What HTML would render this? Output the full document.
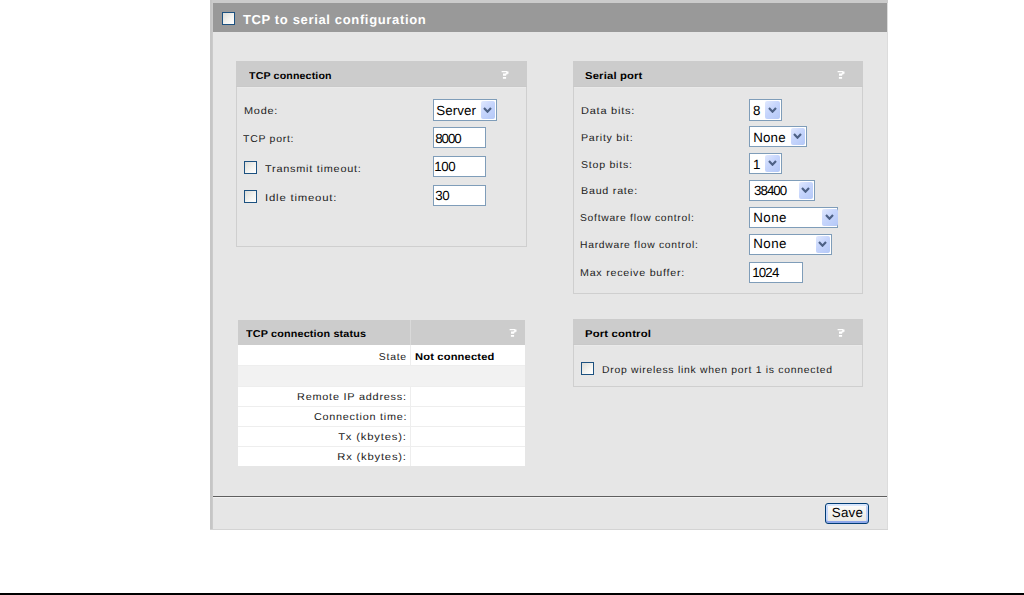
<!DOCTYPE html>
<html><head><meta charset="utf-8"><title>TCP to serial configuration</title>
<style>
html,body{margin:0;padding:0;}
body{width:1024px;height:595px;overflow:hidden;position:relative;background:#fff;font-family:"Liberation Sans", sans-serif;text-rendering:geometricPrecision;}
</style></head><body>
<div style="position:absolute;left:210px;top:0px;width:678px;height:530px;background:#cbcbcb;"></div><div style="position:absolute;left:210px;top:0px;width:2px;height:530px;background:#c6c6c6;"></div><div style="position:absolute;left:213px;top:3px;width:674px;height:526px;background:#e6e6e6;"></div><div style="position:absolute;left:887px;top:3px;width:1px;height:527px;background:#dcdcdc;"></div><div style="position:absolute;left:210px;top:529px;width:678px;height:1px;background:#d4d4d4;"></div><div style="position:absolute;left:213px;top:3px;width:674px;height:29px;background:#999999;"></div><div style="position:absolute;left:222px;top:12px;width:11px;height:11px;border:1px solid #1c5180;background:linear-gradient(135deg,#dcdcd7 0%,#f5f5f2 60%,#ffffff 100%);"></div><div style="position:absolute;left:236px;top:61px;width:289px;height:184px;border:1px solid #cfcfcf;background:#e6e6e6;"></div><div style="position:absolute;left:237px;top:87px;width:289px;height:1px;background:#eaeaea;"></div><div style="position:absolute;left:236px;top:61px;width:291px;height:26px;background:#cccccc;"></div><div style="position:absolute;left:236px;top:86px;width:291px;height:1px;background:#c9c9c9;"></div><svg width="8" height="8" style="position:absolute;left:501px;top:71px" viewBox="0 0 8 8"><path fill="#fff" d="M0.6 0.1h5.6v1.1h-5.6z M5.2 0.6h2.3v2.2h-2.3z M4.2 2.2h2.2v1.2h-2.2z M2 2.6h3.2v2.2h-3.2z M1.9 6h3.2v1.8h-3.2z"/></svg><div style="position:absolute;left:244px;top:161px;width:11px;height:11px;border:1px solid #1c5180;background:linear-gradient(135deg,#dcdcd7 0%,#f5f5f2 60%,#ffffff 100%);"></div><div style="position:absolute;left:244px;top:190px;width:11px;height:11px;border:1px solid #1c5180;background:linear-gradient(135deg,#dcdcd7 0%,#f5f5f2 60%,#ffffff 100%);"></div><div style="position:absolute;left:433px;top:99px;width:62px;height:20px;border:1px solid #7f9db9;background:#fff;"><div style="position:absolute;left:47px;top:1px;width:14px;height:18px;border-radius:2px;background:linear-gradient(135deg,#e1e9fe 0%,#c6d5fc 45%,#b4c8f7 100%);"><svg width="9" height="6" viewBox="0 0 9 6" style="position:absolute;left:2px;top:6px"><path d="M1 1.1 L4.5 4.7 L8 1.1" stroke="#4d6185" stroke-width="2.2" fill="none"/></svg></div></div><div style="position:absolute;left:433px;top:127px;width:51px;height:19px;border:1px solid #7f9db9;background:#fff;"></div><div style="position:absolute;left:433px;top:156px;width:51px;height:19px;border:1px solid #7f9db9;background:#fff;"></div><div style="position:absolute;left:433px;top:185px;width:51px;height:19px;border:1px solid #7f9db9;background:#fff;"></div><div style="position:absolute;left:573px;top:61px;width:288px;height:231px;border:1px solid #cfcfcf;background:#e6e6e6;"></div><div style="position:absolute;left:574px;top:87px;width:288px;height:1px;background:#eaeaea;"></div><div style="position:absolute;left:573px;top:61px;width:290px;height:26px;background:#cccccc;"></div><div style="position:absolute;left:573px;top:86px;width:290px;height:1px;background:#c9c9c9;"></div><svg width="8" height="8" style="position:absolute;left:837px;top:71px" viewBox="0 0 8 8"><path fill="#fff" d="M0.6 0.1h5.6v1.1h-5.6z M5.2 0.6h2.3v2.2h-2.3z M4.2 2.2h2.2v1.2h-2.2z M2 2.6h3.2v2.2h-3.2z M1.9 6h3.2v1.8h-3.2z"/></svg><div style="position:absolute;left:749px;top:99px;width:31px;height:20px;border:1px solid #7f9db9;background:#fff;"><div style="position:absolute;left:15px;top:1px;width:15px;height:18px;border-radius:2px;background:linear-gradient(135deg,#e1e9fe 0%,#c6d5fc 45%,#b4c8f7 100%);"><svg width="9" height="6" viewBox="0 0 9 6" style="position:absolute;left:3px;top:6px"><path d="M1 1.1 L4.5 4.7 L8 1.1" stroke="#4d6185" stroke-width="2.2" fill="none"/></svg></div></div><div style="position:absolute;left:749px;top:126px;width:56px;height:19px;border:1px solid #7f9db9;background:#fff;"><div style="position:absolute;left:41px;top:1px;width:14px;height:17px;border-radius:2px;background:linear-gradient(135deg,#e1e9fe 0%,#c6d5fc 45%,#b4c8f7 100%);"><svg width="9" height="6" viewBox="0 0 9 6" style="position:absolute;left:2px;top:5px"><path d="M1 1.1 L4.5 4.7 L8 1.1" stroke="#4d6185" stroke-width="2.2" fill="none"/></svg></div></div><div style="position:absolute;left:749px;top:153px;width:31px;height:19px;border:1px solid #7f9db9;background:#fff;"><div style="position:absolute;left:15px;top:1px;width:15px;height:17px;border-radius:2px;background:linear-gradient(135deg,#e1e9fe 0%,#c6d5fc 45%,#b4c8f7 100%);"><svg width="9" height="6" viewBox="0 0 9 6" style="position:absolute;left:3px;top:5px"><path d="M1 1.1 L4.5 4.7 L8 1.1" stroke="#4d6185" stroke-width="2.2" fill="none"/></svg></div></div><div style="position:absolute;left:749px;top:180px;width:64px;height:19px;border:1px solid #7f9db9;background:#fff;"><div style="position:absolute;left:49px;top:1px;width:14px;height:17px;border-radius:2px;background:linear-gradient(135deg,#e1e9fe 0%,#c6d5fc 45%,#b4c8f7 100%);"><svg width="9" height="6" viewBox="0 0 9 6" style="position:absolute;left:2px;top:5px"><path d="M1 1.1 L4.5 4.7 L8 1.1" stroke="#4d6185" stroke-width="2.2" fill="none"/></svg></div></div><div style="position:absolute;left:749px;top:207px;width:87px;height:19px;border:1px solid #7f9db9;background:#fff;"><div style="position:absolute;left:72px;top:1px;width:16px;height:17px;border-radius:2px;background:linear-gradient(135deg,#e1e9fe 0%,#c6d5fc 45%,#b4c8f7 100%);"><svg width="9" height="6" viewBox="0 0 9 6" style="position:absolute;left:3px;top:5px"><path d="M1 1.1 L4.5 4.7 L8 1.1" stroke="#4d6185" stroke-width="2.2" fill="none"/></svg></div></div><div style="position:absolute;left:749px;top:234px;width:81px;height:19px;border:1px solid #7f9db9;background:#fff;"><div style="position:absolute;left:66px;top:1px;width:14px;height:17px;border-radius:2px;background:linear-gradient(135deg,#e1e9fe 0%,#c6d5fc 45%,#b4c8f7 100%);"><svg width="9" height="6" viewBox="0 0 9 6" style="position:absolute;left:2px;top:5px"><path d="M1 1.1 L4.5 4.7 L8 1.1" stroke="#4d6185" stroke-width="2.2" fill="none"/></svg></div></div><div style="position:absolute;left:749px;top:262px;width:52px;height:19px;border:1px solid #7f9db9;background:#fff;"></div><div style="position:absolute;left:238px;top:320px;width:287px;height:146px;background:#eeeeee;"></div><div style="position:absolute;left:238px;top:320px;width:287px;height:25px;background:#cccccc;"></div><div style="position:absolute;left:410px;top:320px;width:1px;height:25px;background:#d9d9d9;"></div><svg width="8" height="8" style="position:absolute;left:509px;top:329px" viewBox="0 0 8 8"><path fill="#fff" d="M0.6 0.1h5.6v1.1h-5.6z M5.2 0.6h2.3v2.2h-2.3z M4.2 2.2h2.2v1.2h-2.2z M2 2.6h3.2v2.2h-3.2z M1.9 6h3.2v1.8h-3.2z"/></svg><div style="position:absolute;left:238px;top:345px;width:172px;height:20px;background:#fff;"></div><div style="position:absolute;left:411px;top:345px;width:114px;height:20px;background:#fff;"></div><div style="position:absolute;left:238px;top:366px;width:287px;height:20px;background:#f2f2f2;"></div><div style="position:absolute;left:238px;top:387px;width:172px;height:19px;background:#fff;"></div><div style="position:absolute;left:411px;top:387px;width:114px;height:19px;background:#fff;"></div><div style="position:absolute;left:238px;top:407px;width:172px;height:19px;background:#fff;"></div><div style="position:absolute;left:411px;top:407px;width:114px;height:19px;background:#fff;"></div><div style="position:absolute;left:238px;top:427px;width:172px;height:19px;background:#fff;"></div><div style="position:absolute;left:411px;top:427px;width:114px;height:19px;background:#fff;"></div><div style="position:absolute;left:238px;top:447px;width:172px;height:19px;background:#fff;"></div><div style="position:absolute;left:411px;top:447px;width:114px;height:19px;background:#fff;"></div><div style="position:absolute;left:573px;top:319px;width:288px;height:66px;border:1px solid #cfcfcf;background:#e6e6e6;"></div><div style="position:absolute;left:574px;top:345px;width:288px;height:1px;background:#eaeaea;"></div><div style="position:absolute;left:573px;top:319px;width:290px;height:26px;background:#cccccc;"></div><div style="position:absolute;left:573px;top:344px;width:290px;height:1px;background:#c9c9c9;"></div><svg width="8" height="8" style="position:absolute;left:837px;top:329px" viewBox="0 0 8 8"><path fill="#fff" d="M0.6 0.1h5.6v1.1h-5.6z M5.2 0.6h2.3v2.2h-2.3z M4.2 2.2h2.2v1.2h-2.2z M2 2.6h3.2v2.2h-3.2z M1.9 6h3.2v1.8h-3.2z"/></svg><div style="position:absolute;left:581px;top:362px;width:11px;height:11px;border:1px solid #1c5180;background:linear-gradient(135deg,#dcdcd7 0%,#f5f5f2 60%,#ffffff 100%);"></div><div style="position:absolute;left:213px;top:496px;width:674px;height:1px;background:#5f5f5f;"></div><div style="position:absolute;left:213px;top:497px;width:674px;height:1px;background:#f2f2f2;"></div><div style="position:absolute;left:825px;top:503px;width:42px;height:19px;border:1px solid #003c74;border-radius:3px;background:linear-gradient(180deg,#ffffff 0%,#f4f3ee 40%,#ecebe6 85%,#d6d0c5 100%);box-shadow:inset 0 -2px 0 #8fa8ea, inset 0 2px 0 #d8e6fc, inset 2px 0 0 #c6d8fa, inset -2px 0 0 #bdd0f8;"></div><div style="position:absolute;left:0px;top:593px;width:1024px;height:2px;background:#000;"></div>
<span id="hdr" style="position:absolute;top:11px;font-size:13px;line-height:17px;font-weight:700;color:#ffffff;letter-spacing:0.650px;white-space:pre;left:242.90px;transform-origin:0 0;">TCP to serial configuration<i style="display:inline-block;width:0;height:0;"></i></span><span id="t1" style="position:absolute;top:70px;font-size:10px;line-height:14px;font-weight:700;color:#000;letter-spacing:0.150px;white-space:pre;transform:scaleX(1.0601);left:249.00px;transform-origin:0 0;">TCP connection<i style="display:inline-block;width:0;height:0;"></i></span><span id="mode" style="position:absolute;top:105px;font-size:10px;line-height:14px;font-weight:400;color:#000;letter-spacing:0.700px;white-space:pre;transform:scaleX(1.0919);color:#222;left:244.09px;transform-origin:0 0;">Mode:<i style="display:inline-block;width:0;height:0;"></i></span><span id="tcpport" style="position:absolute;top:133px;font-size:10px;line-height:14px;font-weight:400;color:#000;letter-spacing:0.700px;white-space:pre;transform:scaleX(1.0467);color:#222;left:243.40px;transform-origin:0 0;">TCP port:<i style="display:inline-block;width:0;height:0;"></i></span><span id="txto" style="position:absolute;top:163px;font-size:10px;line-height:14px;font-weight:400;color:#000;letter-spacing:0.700px;white-space:pre;transform:scaleX(1.0884);color:#222;left:265.19px;transform-origin:0 0;">Transmit timeout:<i style="display:inline-block;width:0;height:0;"></i></span><span id="idle" style="position:absolute;top:192px;font-size:10px;line-height:14px;font-weight:400;color:#000;letter-spacing:0.700px;white-space:pre;transform:scaleX(1.1368);color:#222;left:265.00px;transform-origin:0 0;">Idle timeout:<i style="display:inline-block;width:0;height:0;"></i></span><span id="server" style="position:absolute;top:102px;font-size:13.33px;line-height:17px;font-weight:400;color:#000;letter-spacing:0.120px;white-space:pre;left:436.19px;transform-origin:0 0;">Server<i style="display:inline-block;width:0;height:0;"></i></span><span id="i8000" style="position:absolute;top:130px;font-size:13.33px;line-height:17px;font-weight:400;color:#000;letter-spacing:-1.062px;white-space:pre;left:435.19px;transform-origin:0 0;">8000<i style="display:inline-block;width:0;height:0;"></i></span><span id="i100" style="position:absolute;top:158px;font-size:13.33px;line-height:17px;font-weight:400;color:#000;letter-spacing:-0.400px;white-space:pre;left:434.19px;transform-origin:0 0;">100<i style="display:inline-block;width:0;height:0;"></i></span><span id="i30" style="position:absolute;top:187px;font-size:13.33px;line-height:17px;font-weight:400;color:#000;letter-spacing:-0.400px;white-space:pre;left:435.19px;transform-origin:0 0;">30<i style="display:inline-block;width:0;height:0;"></i></span><span id="t2" style="position:absolute;top:70px;font-size:10px;line-height:14px;font-weight:700;color:#000;letter-spacing:0.150px;white-space:pre;transform:scaleX(1.1259);left:584.69px;transform-origin:0 0;">Serial port<i style="display:inline-block;width:0;height:0;"></i></span><span id="sl0" style="position:absolute;top:105px;font-size:10px;line-height:14px;font-weight:400;color:#000;letter-spacing:0.700px;white-space:pre;transform:scaleX(1.0973);color:#222;left:580.69px;transform-origin:0 0;">Data bits:<i style="display:inline-block;width:0;height:0;"></i></span><span id="sl1" style="position:absolute;top:132px;font-size:10px;line-height:14px;font-weight:400;color:#000;letter-spacing:0.700px;white-space:pre;transform:scaleX(1.0630);color:#222;left:580.69px;transform-origin:0 0;">Parity bit:<i style="display:inline-block;width:0;height:0;"></i></span><span id="sl2" style="position:absolute;top:159px;font-size:10px;line-height:14px;font-weight:400;color:#000;letter-spacing:0.700px;white-space:pre;transform:scaleX(1.0606);color:#222;left:580.69px;transform-origin:0 0;">Stop bits:<i style="display:inline-block;width:0;height:0;"></i></span><span id="sl3" style="position:absolute;top:185px;font-size:10px;line-height:14px;font-weight:400;color:#000;letter-spacing:0.700px;white-space:pre;transform:scaleX(1.0737);color:#222;left:580.69px;transform-origin:0 0;">Baud rate:<i style="display:inline-block;width:0;height:0;"></i></span><span id="sl4" style="position:absolute;top:212px;font-size:10px;line-height:14px;font-weight:400;color:#000;letter-spacing:0.700px;white-space:pre;transform:scaleX(1.0316);color:#222;left:580.19px;transform-origin:0 0;">Software flow control:<i style="display:inline-block;width:0;height:0;"></i></span><span id="sl5" style="position:absolute;top:239px;font-size:10px;line-height:14px;font-weight:400;color:#000;letter-spacing:0.700px;white-space:pre;transform:scaleX(1.0320);color:#222;left:580.19px;transform-origin:0 0;">Hardware flow control:<i style="display:inline-block;width:0;height:0;"></i></span><span id="sl6" style="position:absolute;top:267px;font-size:10px;line-height:14px;font-weight:400;color:#000;letter-spacing:0.700px;white-space:pre;transform:scaleX(1.0698);color:#222;left:580.19px;transform-origin:0 0;">Max receive buffer:<i style="display:inline-block;width:0;height:0;"></i></span><span id="s8" style="position:absolute;top:102px;font-size:13.33px;line-height:17px;font-weight:400;color:#000;letter-spacing:0.000px;white-space:pre;left:753.00px;transform-origin:0 0;">8<i style="display:inline-block;width:0;height:0;"></i></span><span id="sn1" style="position:absolute;top:129px;font-size:13.33px;line-height:17px;font-weight:400;color:#000;letter-spacing:0.197px;white-space:pre;left:753.19px;transform-origin:0 0;">None<i style="display:inline-block;width:0;height:0;"></i></span><span id="s1" style="position:absolute;top:156px;font-size:13.33px;line-height:17px;font-weight:400;color:#000;letter-spacing:0.000px;white-space:pre;left:753.00px;transform-origin:0 0;">1<i style="display:inline-block;width:0;height:0;"></i></span><span id="s384" style="position:absolute;top:182px;font-size:13.33px;line-height:17px;font-weight:400;color:#000;letter-spacing:-1.000px;white-space:pre;left:754.09px;transform-origin:0 0;">38400<i style="display:inline-block;width:0;height:0;"></i></span><span id="sn2" style="position:absolute;top:209px;font-size:13.33px;line-height:17px;font-weight:400;color:#000;letter-spacing:0.464px;white-space:pre;left:753.19px;transform-origin:0 0;">None<i style="display:inline-block;width:0;height:0;"></i></span><span id="sn3" style="position:absolute;top:235px;font-size:13.33px;line-height:17px;font-weight:400;color:#000;letter-spacing:0.464px;white-space:pre;left:753.19px;transform-origin:0 0;">None<i style="display:inline-block;width:0;height:0;"></i></span><span id="i1024" style="position:absolute;top:264px;font-size:13.33px;line-height:17px;font-weight:400;color:#000;letter-spacing:-0.870px;white-space:pre;left:752.29px;transform-origin:0 0;">1024<i style="display:inline-block;width:0;height:0;"></i></span><span id="t3" style="position:absolute;top:328px;font-size:10px;line-height:14px;font-weight:700;color:#000;letter-spacing:0.150px;white-space:pre;transform:scaleX(1.0793);left:245.50px;transform-origin:0 0;">TCP connection status<i style="display:inline-block;width:0;height:0;"></i></span><span id="state" style="position:absolute;top:351px;font-size:10px;line-height:14px;font-weight:400;color:#000;letter-spacing:0.700px;white-space:pre;transform:scaleX(1.0428);color:#222;right:617.40px;transform-origin:100% 0;">State<i style="display:inline-block;width:0;height:0;"></i></span><span id="notc" style="position:absolute;top:351px;font-size:10px;line-height:14px;font-weight:700;color:#000;letter-spacing:0.150px;white-space:pre;transform:scaleX(1.1133);left:415.09px;transform-origin:0 0;">Not connected<i style="display:inline-block;width:0;height:0;"></i></span><span id="rip" style="position:absolute;top:391px;font-size:10px;line-height:14px;font-weight:400;color:#000;letter-spacing:0.700px;white-space:pre;transform:scaleX(1.0892);color:#222;right:616.90px;transform-origin:100% 0;">Remote IP address:<i style="display:inline-block;width:0;height:0;"></i></span><span id="ctime" style="position:absolute;top:411px;font-size:10px;line-height:14px;font-weight:400;color:#000;letter-spacing:0.700px;white-space:pre;transform:scaleX(1.0823);color:#222;right:616.90px;transform-origin:100% 0;">Connection time:<i style="display:inline-block;width:0;height:0;"></i></span><span id="tx" style="position:absolute;top:431px;font-size:10px;line-height:14px;font-weight:400;color:#000;letter-spacing:0.700px;white-space:pre;transform:scaleX(1.1295);color:#222;right:616.90px;transform-origin:100% 0;">Tx (kbytes):<i style="display:inline-block;width:0;height:0;"></i></span><span id="rx" style="position:absolute;top:451px;font-size:10px;line-height:14px;font-weight:400;color:#000;letter-spacing:0.700px;white-space:pre;transform:scaleX(1.1238);color:#222;right:616.90px;transform-origin:100% 0;">Rx (kbytes):<i style="display:inline-block;width:0;height:0;"></i></span><span id="t4" style="position:absolute;top:328px;font-size:10px;line-height:14px;font-weight:700;color:#000;letter-spacing:0.150px;white-space:pre;transform:scaleX(1.1295);left:585.25px;transform-origin:0 0;">Port control<i style="display:inline-block;width:0;height:0;"></i></span><span id="drop" style="position:absolute;top:364px;font-size:10px;line-height:14px;font-weight:400;color:#000;letter-spacing:0.700px;white-space:pre;transform:scaleX(1.0375);color:#222;left:602.09px;transform-origin:0 0;">Drop wireless link when port 1 is connected<i style="display:inline-block;width:0;height:0;"></i></span><span id="save" style="position:absolute;top:504px;font-size:13.33px;line-height:17px;font-weight:400;color:#000;letter-spacing:0.260px;white-space:pre;left:831.79px;transform-origin:0 0;">Save<i style="display:inline-block;width:0;height:0;"></i></span>
</body></html>
